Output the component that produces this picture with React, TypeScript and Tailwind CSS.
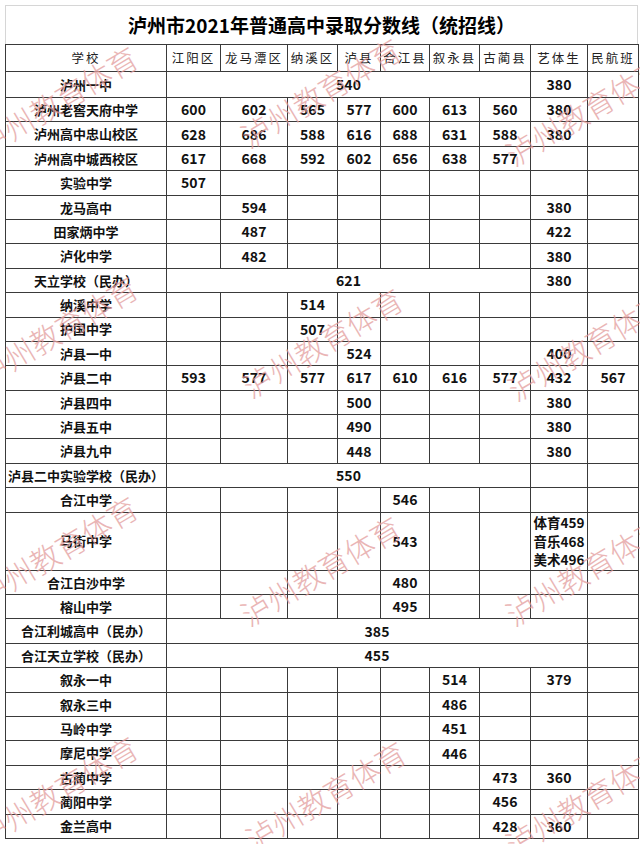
type Cell = string | { v: string; span: number } | { lines: string[] };

const HEADERS = ['学校', '江阳区', '龙马潭区', '纳溪区', '泸县', '合江县', '叙永县', '古蔺县', '艺体生', '民航班'];
const WIDTHS = ['w-[161px]', 'w-[54px]', 'w-[67px]', 'w-[50px]', 'w-[43px]', 'w-[49px]', 'w-[50px]', 'w-[51px]', 'w-[57px]', 'w-[51px]'];

// one entry per school: name, then the score cells (spans where a score covers several districts)
const ROWS: Cell[][] = [
  ['泸州一中', { v: '540', span: 7 }, '380', ''],
  ['泸州老窖天府中学', '600', '602', '565', '577', '600', '613', '560', '380', ''],
  ['泸州高中忠山校区', '628', '686', '588', '616', '688', '631', '588', '380', ''],
  ['泸州高中城西校区', '617', '668', '592', '602', '656', '638', '577', '', ''],
  ['实验中学', '507', '', '', '', '', '', '', '', ''],
  ['龙马高中', '', '594', '', '', '', '', '', '380', ''],
  ['田家炳中学', '', '487', '', '', '', '', '', '422', ''],
  ['泸化中学', '', '482', '', '', '', '', '', '380', ''],
  ['天立学校（民办）', { v: '621', span: 7 }, '380', ''],
  ['纳溪中学', '', '', '514', '', '', '', '', '', ''],
  ['护国中学', '', '', '507', '', '', '', '', '', ''],
  ['泸县一中', '', '', '', '524', '', '', '', '400', ''],
  ['泸县二中', '593', '577', '577', '617', '610', '616', '577', '432', '567'],
  ['泸县四中', '', '', '', '500', '', '', '', '380', ''],
  ['泸县五中', '', '', '', '490', '', '', '', '380', ''],
  ['泸县九中', '', '', '', '448', '', '', '', '380', ''],
  ['泸县二中实验学校（民办）', { v: '550', span: 7 }, '', ''],
  ['合江中学', '', '', '', '', '546', '', '', '', ''],
  ['马街中学', '', '', '', '', '543', '', '', { lines: ['体育459', '音乐468', '美术496'] }, ''],
  ['合江白沙中学', '', '', '', '', '480', '', '', '', ''],
  ['榕山中学', '', '', '', '', '495', '', '', '', ''],
  ['合江利城高中（民办）', { v: '385', span: 8 }, ''],
  ['合江天立学校（民办）', { v: '455', span: 8 }, ''],
  ['叙永一中', '', '', '', '', '', '514', '', '379', ''],
  ['叙永三中', '', '', '', '', '', '486', '', '', ''],
  ['马岭中学', '', '', '', '', '', '451', '', '', ''],
  ['摩尼中学', '', '', '', '', '', '446', '', '', ''],
  ['古蔺中学', '', '', '', '', '', '', '473', '360', ''],
  ['蔺阳中学', '', '', '', '', '', '', '456', '', ''],
  ['金兰高中', '', '', '', '', '', '', '428', '360', ''],
];

const MARKS = [
  [-38, 100], [225, 92], [490, 110],
  [-38, 330], [227, 342], [492, 345],
  [-38, 550], [225, 570], [490, 570],
  [-38, 790], [230, 795], [490, 800],
];

const font = { fontFamily: '"Noto Sans CJK SC", "Noto Sans", sans-serif' };

function rowHeight(i: number) {
  if (i === 0) return 'h-[26px]';
  if (i === 18) return 'h-[58px]';
  return 'h-[24.4px]';
}

function ScoreCell({ cell }: { cell: Cell }) {
  if (typeof cell === 'string') {
    return <td className="border border-[#3a3a3a] text-center text-[14px] font-bold">{cell}</td>;
  }
  if ('lines' in cell) {
    return (
      <td className="border border-[#3a3a3a] text-center text-[13.5px] font-bold leading-[18.5px]">
        {cell.lines.map((l) => (
          <div key={l}>{l}</div>
        ))}
      </td>
    );
  }
  return (
    <td colSpan={cell.span} className="border border-[#3a3a3a] text-center text-[14px] font-bold">
      {cell.v}
    </td>
  );
}

export default function App() {
  return (
    <div className="relative h-[844px] w-[640px] overflow-hidden bg-white pl-[5px] pt-[5px] text-[#111]" style={font}>
      <div className="flex h-[39px] w-[633px] items-center justify-center border-x border-t border-[#d6d6d6] text-[19px] font-bold text-black">
        泸州市2021年普通高中录取分数线（统招线）
      </div>
      <table className="w-[633px] table-fixed border-collapse">
        <colgroup>
          {WIDTHS.map((w, i) => (
            <col key={i} className={w} />
          ))}
        </colgroup>
        <thead>
          <tr className="h-[27px]">
            {HEADERS.map((h) => (
              <th key={h} className="border border-[#3a3a3a] p-0 text-center text-[12.5px] font-normal tracking-[2px] text-[#222]">
                {h}
              </th>
            ))}
          </tr>
        </thead>
        <tbody>
          {ROWS.map((row, i) => (
            <tr key={i} className={rowHeight(i)}>
              <td className="border border-[#3a3a3a] p-0 text-center text-[13px] font-bold">{row[0] as string}</td>
              {row.slice(1).map((c, j) => (
                <ScoreCell key={j} cell={c} />
              ))}
            </tr>
          ))}
        </tbody>
      </table>

      {/* watermark overlay */}
      {MARKS.map(([x, y], i) => (
        <div
          key={i}
          className="pointer-events-none absolute w-[190px] -translate-y-1/2 -rotate-[31deg] text-center text-[30px] font-light leading-none text-[#e39d9d] opacity-75 select-none"
          style={{ left: x, top: y }}
        >
          泸州教育体育
        </div>
      ))}
    </div>
  );
}
